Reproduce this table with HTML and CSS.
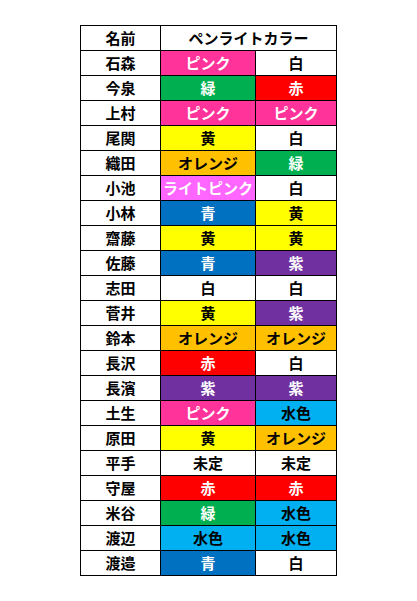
FILE: index.html
```html
<!DOCTYPE html>
<html lang="ja">
<head>
<meta charset="utf-8">
<link rel="stylesheet" href="styles.css">
</head>
<body>
<table class="pen">
<colgroup><col class="c-name"><col class="c-a"><col class="c-b"></colgroup>
<tr><th>名前</th><th colspan="2">ペンライトカラー</th></tr>
<tr><td>石森</td><td class="pink">ピンク</td><td>白</td></tr>
<tr><td>今泉</td><td class="green">緑</td><td class="red">赤</td></tr>
<tr><td>上村</td><td class="pink">ピンク</td><td class="pink">ピンク</td></tr>
<tr><td>尾関</td><td class="yellow">黄</td><td>白</td></tr>
<tr><td>織田</td><td class="orange">オレンジ</td><td class="green">緑</td></tr>
<tr><td>小池</td><td class="lpink">ライトピンク</td><td>白</td></tr>
<tr><td>小林</td><td class="blue">青</td><td class="yellow">黄</td></tr>
<tr><td>齋藤</td><td class="yellow">黄</td><td class="yellow">黄</td></tr>
<tr><td>佐藤</td><td class="blue">青</td><td class="purple">紫</td></tr>
<tr><td>志田</td><td>白</td><td>白</td></tr>
<tr><td>菅井</td><td class="yellow">黄</td><td class="purple">紫</td></tr>
<tr><td>鈴本</td><td class="orange">オレンジ</td><td class="orange">オレンジ</td></tr>
<tr><td>長沢</td><td class="red">赤</td><td>白</td></tr>
<tr><td>長濱</td><td class="purple">紫</td><td class="purple">紫</td></tr>
<tr><td>土生</td><td class="pink">ピンク</td><td class="sky">水色</td></tr>
<tr><td>原田</td><td class="yellow">黄</td><td class="orange">オレンジ</td></tr>
<tr><td>平手</td><td>未定</td><td>未定</td></tr>
<tr><td>守屋</td><td class="red">赤</td><td class="red">赤</td></tr>
<tr><td>米谷</td><td class="green">緑</td><td class="sky">水色</td></tr>
<tr><td>渡辺</td><td class="sky">水色</td><td class="sky">水色</td></tr>
<tr><td>渡邉</td><td class="blue">青</td><td>白</td></tr>
</table>
</body>
</html>
```
FILE: styles.css
```css
html, body {
  margin: 0;
  padding: 0;
  background: #ffffff;
}
body {
  padding: 25px 0 0 80px;
  font-family: "Noto Sans CJK JP", "Noto Sans", sans-serif;
}
.pen {
  border-collapse: collapse;
  table-layout: fixed;
  width: 257px;
}
.c-name { width: 80px; }
.c-a { width: 95px; }
.c-b { width: 81px; }
.pen th, .pen td {
  border: 1px solid #000;
  height: 24px;
  padding: 0;
  text-align: center;
  vertical-align: middle;
  font-size: 15px;
  font-weight: 700;
  line-height: 24px;
  color: #000;
  white-space: nowrap;
  overflow: hidden;
}
.pink { background: #ff3399; color: #fff !important; }
.lpink { background: #ff66ff; color: #fff !important; }
.green { background: #00b050; color: #fff !important; }
.red { background: #ff0000; color: #fff !important; }
.yellow { background: #ffff00; }
.orange { background: #ffc000; }
.blue { background: #0070c0; color: #fff !important; }
.purple { background: #7030a0; color: #fff !important; }
.sky { background: #00b0f0; }
```
